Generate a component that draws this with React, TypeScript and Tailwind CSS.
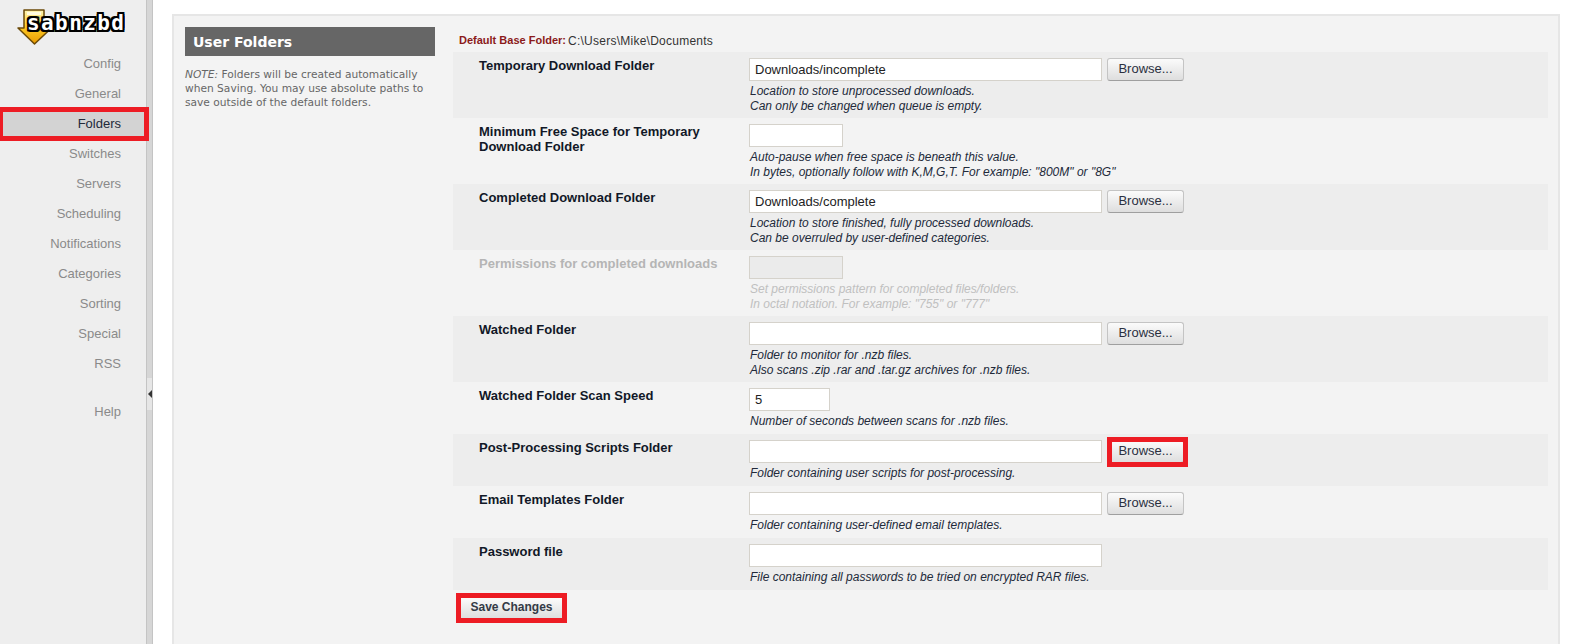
import React from "react";

const navItems = ["Config", "General", "Folders", "Switches", "Servers", "Scheduling", "Notifications", "Categories", "Sorting", "Special", "RSS"];

type Row = {
  label: string;
  value?: string;
  input: string;
  browse?: boolean;
  marked?: boolean;
  disabled?: boolean;
  height: string;
  help: string[];
};

const rows: Row[] = [
  { label: "Temporary Download Folder", value: "Downloads/incomplete", input: "w-[353px]", browse: true, height: "h-[66px]", help: ["Location to store unprocessed downloads.", "Can only be changed when queue is empty."] },
  { label: "Minimum Free Space for Temporary Download Folder", input: "w-[94px]", height: "h-[66px]", help: ["Auto-pause when free space is beneath this value.", 'In bytes, optionally follow with K,M,G,T. For example: "800M" or "8G"'] },
  { label: "Completed Download Folder", value: "Downloads/complete", input: "w-[353px]", browse: true, height: "h-[66px]", help: ["Location to store finished, fully processed downloads.", "Can be overruled by user-defined categories."] },
  { label: "Permissions for completed downloads", input: "w-[94px]", disabled: true, height: "h-[66px]", help: ["Set permissions pattern for completed files/folders.", 'In octal notation. For example: "755" or "777"'] },
  { label: "Watched Folder", input: "w-[353px]", browse: true, height: "h-[66px]", help: ["Folder to monitor for .nzb files.", "Also scans .zip .rar and .tar.gz archives for .nzb files."] },
  { label: "Watched Folder Scan Speed", value: "5", input: "w-[81px]", height: "h-[52px]", help: ["Number of seconds between scans for .nzb files."] },
  { label: "Post-Processing Scripts Folder", input: "w-[353px]", browse: true, marked: true, height: "h-[52px]", help: ["Folder containing user scripts for post-processing."] },
  { label: "Email Templates Folder", input: "w-[353px]", browse: true, height: "h-[52px]", help: ["Folder containing user-defined email templates."] },
  { label: "Password file", input: "w-[353px]", height: "h-[52px]", help: ["File containing all passwords to be tried on encrypted RAR files."] },
];

function Logo() {
  return (
    <div className="relative h-[48px] w-full">
      <svg className="absolute left-[17px] top-[9px]" width="36" height="36" viewBox="0 0 36 36">
        <defs>
          <linearGradient id="arrow" x1="0" y1="0" x2="0" y2="1">
            <stop offset="0" stopColor="#fff6b8" />
            <stop offset="0.45" stopColor="#ffd02a" />
            <stop offset="1" stopColor="#e89a00" />
          </linearGradient>
        </defs>
        <path d="M7 1h20v18h7.500L17.500 35 1 19h6z" fill="url(#arrow)" stroke="#6b4a08" strokeWidth="1.500" strokeLinejoin="round" />
        <path d="M10 3h14v3H10z" fill="#fffbe0" />
      </svg>
      <span className="absolute left-[27px] top-[13px] font-['DejaVu_Sans_Mono',monospace] text-[21px] leading-[21px] font-bold tracking-[1.4px] text-white [text-shadow:2px_0_0_#000,-2px_0_0_#000,0_2px_0_#000,0_-2px_0_#000,2px_2px_0_#000,-2px_-2px_0_#000,2px_-2px_0_#000,-2px_2px_0_#000]">
        sabnzbd
      </span>
    </div>
  );
}

function Sidebar() {
  return (
    <aside className="h-full w-[146px] shrink-0 bg-[#eeeeee]">
      <Logo />
      <nav className="flex flex-col text-[13px] text-[#8a8a8a]">
        {navItems.map((item) =>
          item === "Folders" ? (
            <div key={item} className="relative flex h-[30px] items-center justify-end bg-[#d3d3d3] pt-[1px] pr-[25px] text-[#222a3a]">
              {item}
              <span className="absolute -top-[1px] -bottom-[3px] left-0 -right-[3px] border-[5px] border-l-[3px] border-[#ed1c24]" />
            </div>
          ) : (
            <div key={item} className="flex h-[30px] items-center justify-end pt-[1px] pr-[25px]">
              {item}
            </div>
          ),
        )}
        <div className="mt-[18px] flex h-[30px] items-center justify-end pt-[1px] pr-[25px]">Help</div>
      </nav>
    </aside>
  );
}

function Splitter() {
  return (
    <div className="flex h-full w-[7px] shrink-0 flex-col items-center justify-start border-x border-[#c4c4c4] bg-[#d6d6d6] pt-[378px]">
      <div className="flex h-[32px] w-[5px] items-center justify-center bg-[#e6e6e6]">
        <span className="h-0 w-0 border-y-[4px] border-r-[4px] border-y-transparent border-r-[#333333]" />
      </div>
    </div>
  );
}

function BrowseButton({ marked }: { marked?: boolean }) {
  return (
    <button className="relative ml-[5px] h-[23px] w-[77px] rounded-[3px] border border-[#c4c4c4] border-b-[#9f9f9f] bg-gradient-to-b from-[#fbfbfb] to-[#dedede] pb-[2px] text-[13px] leading-none text-[#2b3040]">
      Browse...
      {marked && <span className="absolute -top-[4px] -bottom-[5px] -left-[1px] -right-[5px] border-[5px] border-[#ed1c24]" />}
    </button>
  );
}

function SettingRow({ row, shaded }: { row: Row; shaded: boolean }) {
  return (
    <div className={`flex pt-[6px] ${row.height} ${shaded ? "bg-[#ededed]" : ""}`}>
      <div className={`w-[296px] shrink-0 pr-[30px] pl-[26px] text-[13px] leading-[15px] font-bold ${row.disabled ? "text-[#b5b5b5]" : "text-[#111827]"}`}>
        {row.label}
      </div>
      <div className="flex-1">
        <div className="flex">
          <input
            readOnly
            disabled={row.disabled}
            value={row.value ?? ""}
            className={`h-[23px] ${row.input} border border-[#d5d2cb] px-[5px] pb-[1px] text-[13px] text-[#222222] ${row.disabled ? "bg-[#ebebeb]" : "bg-white"}`}
          />
          {row.browse && <BrowseButton marked={row.marked} />}
        </div>
        <div className={`mt-[3px] pl-[1px] text-[12px] leading-[15px] italic ${row.disabled ? "text-[#c0c0c0]" : "text-[#222a3a]"}`}>
          {row.help.map((line) => (
            <div key={line}>{line}</div>
          ))}
        </div>
      </div>
    </div>
  );
}

export default function App() {
  return (
    <div className="flex h-[644px] w-[1569px] overflow-hidden bg-white font-['Liberation_Sans',Arial,sans-serif]">
      <Sidebar />
      <Splitter />
      <main className="ml-[19px] mt-[14px] mr-[9px] flex flex-1 border-x-2 border-t-2 border-[#e6e6e6] bg-[#f3f3f3] pt-[11px] pr-[10px] pl-[11px]">
        <section className="w-[250px] shrink-0">
          <h2 className="flex h-[29px] items-center bg-[#666666] pt-[1px] pl-[8px] font-['DejaVu_Sans',sans-serif] text-[14px] font-bold text-white">
            User Folders
          </h2>
          <p className="mt-[12px] font-['DejaVu_Sans',sans-serif] text-[10.65px] leading-[14px] text-[#666666]">
            <em>NOTE:</em> Folders will be created automatically when Saving. You may use absolute paths to save outside of the default folders.
          </p>
        </section>
        <section className="ml-[18px] flex-1">
          <div className="flex h-[25px] items-center pt-[2px] pl-[6px] text-[12px] tracking-[0.25px] text-[#333333]">
            <b className="mr-[2px] text-[11px] tracking-normal text-[#8b1a1a]">Default Base Folder:</b> C:\Users\Mike\Documents
          </div>
          {rows.map((row, i) => (
            <SettingRow key={row.label} row={row} shaded={i % 2 === 0} />
          ))}
          <button className="relative mt-[8px] ml-[8px] h-[20px] w-[101px] bg-gradient-to-b from-[#fbfbfb] to-[#dedede] pb-[2px] text-[12px] leading-none font-bold text-[#333a46]">
            Save Changes
            <span className="absolute -inset-[5px] border-[5px] border-[#ed1c24]" />
          </button>
        </section>
      </main>
    </div>
  );
}
